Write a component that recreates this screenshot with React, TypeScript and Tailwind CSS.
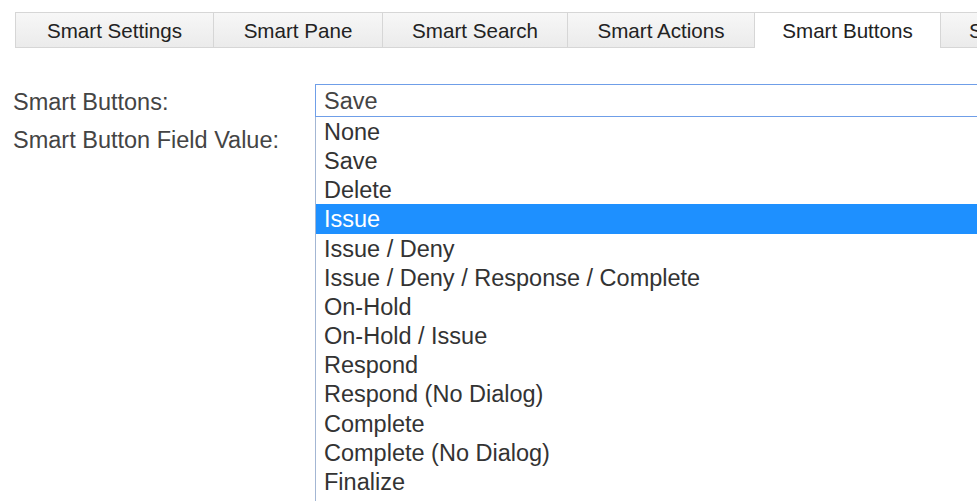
import React from "react";

const tabs = [
  { label: "Smart Settings", w: "w-[198px] justify-center" },
  { label: "Smart Pane", w: "w-[169px] justify-center" },
  { label: "Smart Search", w: "w-[185px] justify-center" },
  { label: "Smart Actions", w: "w-[187px] justify-center" },
  { label: "Smart Buttons", w: "w-[186px] justify-center", active: true },
  { label: "Smart Fields", w: "w-[186px] justify-start pl-[28px]" },
];

const options = [
  "None",
  "Save",
  "Delete",
  "Issue",
  "Issue / Deny",
  "Issue / Deny / Response / Complete",
  "On-Hold",
  "On-Hold / Issue",
  "Respond",
  "Respond (No Dialog)",
  "Complete",
  "Complete (No Dialog)",
  "Finalize",
  "Reopen",
];

export default function App() {
  return (
    <div className="w-[977px] h-[501px] overflow-hidden bg-white font-['Liberation_Sans',Arial,sans-serif]">
      <div className="flex pl-[15px] pt-[12px]">
        {tabs.map((t) => (
          <div
            key={t.label}
            className={
              t.active
                ? `${t.w} shrink-0 h-[36px] pt-[2px] flex items-center border-t border-l border-[#d6d6d6] bg-white text-[20.6px] text-[#222]`
                : `${t.w} shrink-0 h-[36px] pt-[2px] flex items-center border-t border-l border-b border-[#d6d6d6] bg-gradient-to-b from-[#f7f7f7] to-[#ebebeb] text-[20.6px] text-[#222]`
            }
          >
            {t.label}
          </div>
        ))}
      </div>
      <div className="flex pt-[36px]">
        <div className="w-[315px] shrink-0 pl-[13px] pt-[2px] text-[23.5px] text-[#444]">
          <div className="h-[33px] flex items-center">Smart Buttons:</div>
          <div className="h-[43px] flex items-center">Smart Button Field Value:</div>
        </div>
        <div className="w-[700px] shrink-0">
          <div className="h-[33px] border border-[#6f9ee8] flex items-center pl-[8px] pt-[2px] text-[23.5px] text-[#444]">
            Save
          </div>
          <div className="border-l border-[#a3b6d3] text-[23.5px] text-[#333]">
            {options.map((o) => (
              <div
                key={o}
                className={
                  o === "Issue"
                    ? "h-[29.17px] flex items-center pl-[8px] pt-[2px] bg-[#1e90ff] text-white"
                    : "h-[29.17px] flex items-center pl-[8px] pt-[2px]"
                }
              >
                {o}
              </div>
            ))}
          </div>
        </div>
      </div>
    </div>
  );
}
